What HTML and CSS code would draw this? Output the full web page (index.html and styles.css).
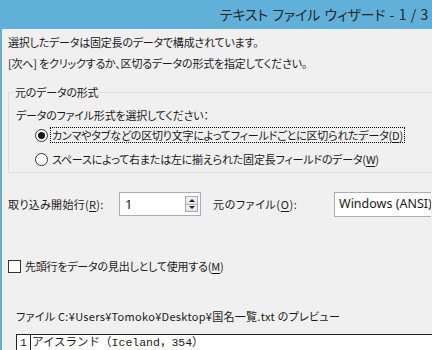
FILE: index.html
```html
<!DOCTYPE html>
<html lang="ja">
<head>
  <meta charset="UTF-8" />
  <title>テキスト ファイル ウィザード</title>
  <link rel="stylesheet" href="styles.css">
</head>
<body>

<div class="window">
  <header class="titlebar">
    <span>テキスト ファイル ウィザード - 1 / 3</span>
  </header>

  <main class="content">
    <p class="intro">選択したデータは固定長のデータで構成されています。</p>
    <p class="intro">[次へ] をクリックするか、区切るデータの形式を指定してください。</p>

    <fieldset class="group">
      <legend>元のデータの形式</legend>
      <p class="prompt">データのファイル形式を選択してください：</p>
      <label class="option">
        <span class="radio checked"></span>
        <span class="option-text focused">カンマやタブなどの区切り文字によってフィールドごとに区切られたデータ(<u>D</u>)</span>
      </label>
      <label class="option">
        <span class="radio"></span>
        <span class="option-text">スペースによって右または左に揃えられた固定長フィールドのデータ(<u>W</u>)</span>
      </label>
    </fieldset>

    <div class="start-row">
      <span class="start-label">取り込み開始行(<u>R</u>):</span>
      <div class="spin">
        <span class="spin-value">1</span>
        <span class="spin-buttons">
          <span class="spin-btn up"></span>
          <span class="spin-btn down"></span>
        </span>
      </div>
      <span class="origin-label">元のファイル(<u>O</u>):</span>
      <div class="combo">Windows (ANSI)</div>
    </div>

    <label class="check-row">
      <span class="checkbox"></span>
      <span>先頭行をデータの見出しとして使用する(<u>M</u>)</span>
    </label>

    <p class="preview-label">ファイル C:¥Users¥Tomoko¥Desktop¥国名一覧.txt のプレビュー</p>

    <div class="preview">
      <div class="preview-line">
        <span class="line-no">1</span>
        <span class="line-text">アイスランド（Iceland，354）</span>
      </div>
    </div>
  </main>
</div>

</body>
</html>
```

FILE: styles.css
```css
:root {
  --accent: #61b0d9;
  --face: #f0f0f0;
  --text: #1a1a1a;
  --edge: #dcdcdc;
  --field-edge: #abadb3;
}

* {
  box-sizing: border-box;
}

body {
  margin: 0;
  width: 432px;
  height: 350px;
  overflow: hidden;
  background: var(--face);
  color: var(--text);
  font-family: "Noto Sans CJK JP", sans-serif;
  font-size: 11px;
  letter-spacing: -0.2px;
  font-feature-settings: "palt";
}

p {
  margin: 0;
}

u {
  text-underline-offset: 2px;
}

.window {
  height: 350px;
  border-left: 2px solid var(--accent);
  display: flex;
  flex-direction: column;
}

.titlebar {
  height: 29px;
  flex-shrink: 0;
  background: var(--accent);
  display: flex;
  align-items: center;
  justify-content: flex-end;
  padding: 0 4px 1px 0;
  font-size: 14px;
  word-spacing: 1.5px;
  color: #262626;
  white-space: nowrap;
}

.content {
  flex: 1;
  min-height: 0;
  padding: 3px 0 0 6px;
  display: flex;
  flex-direction: column;
  align-items: flex-start;
}

.intro {
  line-height: 21px;
  white-space: nowrap;
}

/* group box (runs on past the right edge of the window) */
.group {
  margin: 11px 0 0 0;
  padding: 8px 0 1px 7px;
  border: 1px solid var(--edge);
  border-right: none;
  width: 424px;
  min-width: 0;
}

.group legend {
  padding: 0 1px;
  margin-left: -2px;
  line-height: 14px;
}

.prompt {
  line-height: 16px;
}

.option {
  display: flex;
  align-items: center;
  height: 24px;
  padding-left: 19px;
  white-space: nowrap;
}

.radio {
  width: 13px;
  height: 13px;
  border: 1px solid #333;
  border-radius: 50%;
  background: #fff;
  margin-right: 2px;
  display: flex;
  align-items: center;
  justify-content: center;
}

.radio.checked::after {
  content: "";
  width: 7px;
  height: 7px;
  border-radius: 50%;
  background: #1a1a1a;
}

.option-text {
  padding: 0 1px;
  border: 1px solid transparent;
  line-height: 14px;
}

.option-text.focused {
  border: 1px dotted #000;
}

/* start row */
.start-row {
  margin-top: 19px;
  display: flex;
  align-items: center;
  height: 24px;
  white-space: nowrap;
}

.start-label {
  width: 111px;
  letter-spacing: 0.3px;
}

.spin {
  width: 82px;
  height: 24px;
  border: 1px solid var(--field-edge);
  background: #fff;
  display: flex;
  align-items: center;
  justify-content: space-between;
  padding: 0 2px 0 5px;
  font-family: "Noto Sans", sans-serif;
  font-size: 13px;
}

.spin-buttons {
  display: flex;
  flex-direction: column;
  width: 13px;
  height: 16px;
}

.spin-btn {
  flex: 1;
  border: 1px solid #acacac;
  background: linear-gradient(#f2f2f2, #e5e5e5);
  display: flex;
  align-items: center;
  justify-content: center;
}

.spin-btn.down {
  border-top: none;
}

.spin-btn.up::after,
.spin-btn.down::after {
  content: "";
  border-left: 3px solid transparent;
  border-right: 3px solid transparent;
}

.spin-btn.up::after {
  border-bottom: 3px solid #222;
}

.spin-btn.down::after {
  border-top: 3px solid #222;
}

.origin-label {
  margin-left: 12px;
  width: 121px;
  letter-spacing: 0.6px;
}

.combo {
  width: 97px;
  height: 25px;
  border: 1px solid var(--field-edge);
  border-right: none;
  background: #fff;
  padding: 0 0 1px 4px;
  display: flex;
  align-items: center;
  font-family: "Noto Sans", sans-serif;
  font-size: 12.5px;
  letter-spacing: 0;
  overflow: hidden;
}

/* checkbox */
.check-row {
  margin-top: 41px;
  display: flex;
  align-items: center;
  height: 18px;
  white-space: nowrap;
}

.checkbox {
  width: 13px;
  height: 13px;
  border: 1px solid #333;
  background: #fff;
  margin-right: 4px;
}

/* preview (cut by the bottom and right edges) */
.preview-label {
  margin: 32px 0 0 8px;
  line-height: 18px;
  letter-spacing: 0.3px;
  white-space: nowrap;
}

.preview {
  flex: 1;
  min-height: 0;
  margin: 9px 0 0 8px;
  width: 416px;
  border: 1px solid #222;
  border-right: none;
  border-bottom: none;
  background: #fff;
  overflow: hidden;
}

.preview-line {
  display: flex;
  height: 16px;
  font-family: "Liberation Mono", "Noto Sans CJK JP", monospace;
  font-size: 11.5px;
  letter-spacing: 0;
  font-feature-settings: normal;
}

.line-no {
  width: 14px;
  border-right: 1px solid #222;
  text-align: center;
  line-height: 16px;
}

.line-text {
  padding-left: 1px;
  line-height: 16px;
  white-space: nowrap;
}
```
